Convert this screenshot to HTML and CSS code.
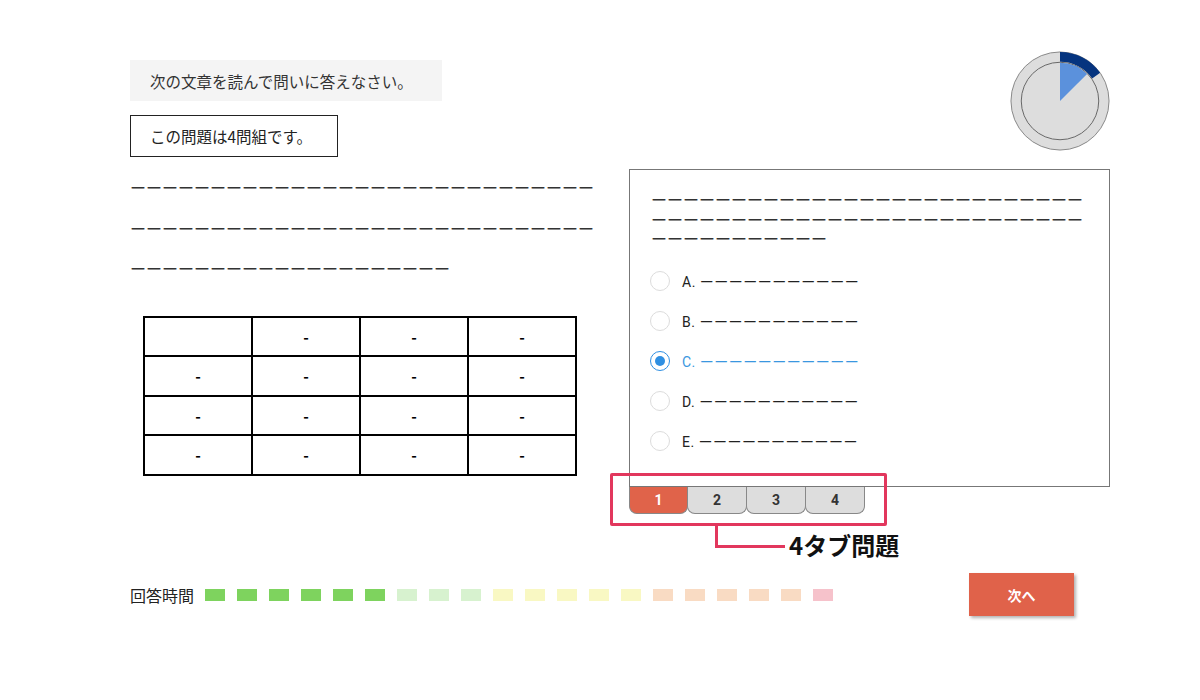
FILE: index.html
```html
<!DOCTYPE html>
<html lang="ja">
<head>
<meta charset="utf-8">
<title>問題</title>
<link rel="stylesheet" href="styles.css">
</head>
<body>
<div class="page">
  <div class="main">
    <div class="left">
      <div class="instruction">次の文章を読んで問いに答えなさい。</div>
      <div class="notice">この問題は4問組です。</div>
      <p class="passage">ーーーーーーーーーーーーーーーーーーーーーーーーーーーーーーーーーーーーーーーーーーーーーーーーーーーーーーーーーーーーーーーーーーーーーーーーーーーーーー</p>
      <table class="data">
        <tr><td></td><td>-</td><td>-</td><td>-</td></tr>
        <tr><td>-</td><td>-</td><td>-</td><td>-</td></tr>
        <tr><td>-</td><td>-</td><td>-</td><td>-</td></tr>
        <tr><td>-</td><td>-</td><td>-</td><td>-</td></tr>
      </table>
    </div>
    <div class="right">
      <div class="timer">
        <svg width="102" height="102" viewBox="-1 -1 104 104">
          <circle cx="51" cy="51" r="50" fill="#dddddd" stroke="#888888" stroke-width="1"/>
          <path d="M51 1 A50 50 0 0 1 91.96 22.32 L83.77 28.06 A40 40 0 0 0 51 11 Z" fill="#05347f"/>
          <circle cx="51" cy="51" r="39.5" fill="none" stroke="#666666" stroke-width="1"/>
          <path d="M51 51 L51 12 A39 39 0 0 1 78.58 23.42 Z" fill="#5b91dc"/>
        </svg>
      </div>
      <div class="question">
        <p class="q-text">ーーーーーーーーーーーーーーーーーーーーーーーーーーーーーーーーーーーーーーーーーーーーーーーーーーーーーーーーーーーーーーーーー</p>
        <ul class="options">
          <li class="option"><span class="radio"></span><span class="opt-label">A. ーーーーーーーーーーー</span></li>
          <li class="option"><span class="radio"></span><span class="opt-label">B. ーーーーーーーーーーー</span></li>
          <li class="option selected"><span class="radio"></span><span class="opt-label">C. ーーーーーーーーーーー</span></li>
          <li class="option"><span class="radio"></span><span class="opt-label">D. ーーーーーーーーーーー</span></li>
          <li class="option"><span class="radio"></span><span class="opt-label">E. ーーーーーーーーーーー</span></li>
        </ul>
      </div>
      <div class="tabs">
        <button class="tab active">1</button>
        <button class="tab">2</button>
        <button class="tab">3</button>
        <button class="tab">4</button>
        <div class="callout-box"></div>
        <div class="callout-line"></div>
        <div class="callout-label">4タブ問題</div>
      </div>
    </div>
  </div>
  <div class="footer">
    <span class="time-label">回答時間</span>
    <div class="time-bar">
      <span class="seg g"></span><span class="seg g"></span><span class="seg g"></span><span class="seg g"></span><span class="seg g"></span><span class="seg g"></span>
      <span class="seg lg"></span><span class="seg lg"></span><span class="seg lg"></span>
      <span class="seg y"></span><span class="seg y"></span><span class="seg y"></span><span class="seg y"></span><span class="seg y"></span>
      <span class="seg o"></span><span class="seg o"></span><span class="seg o"></span><span class="seg o"></span><span class="seg o"></span>
      <span class="seg p"></span>
    </div>
    <button class="next">次へ</button>
  </div>
</div>
</body>
</html>
```

FILE: styles.css
```css
* { box-sizing: border-box; }
html, body { margin: 0; background: #fff; }
body {
  font-family: "Noto Sans CJK JP", "Noto Sans", sans-serif;
  color: #222;
  width: 1200px;
  height: 700px;
  overflow: hidden;
}
.page {
  padding: 50px 90px 0 130px;
}
.main {
  display: flex;
  gap: 29px;
}
.left { width: 470px; }
.right { width: 481px; }

.instruction {
  margin-top: 10px;
  width: 312px;
  height: 41px;
  background: #f4f4f4;
  padding-left: 20px;
  display: flex;
  align-items: center;
  font-size: 15.5px;
  color: #333;
}
.notice {
  margin-top: 14px;
  width: 208px;
  height: 42px;
  border: 1px solid #222;
  padding-left: 19px;
  display: flex;
  align-items: center;
  font-size: 15.5px;
  color: #222;
}
.passage {
  margin: 10px 0 0;
  font-size: 16px;
  line-height: 40.5px;
  color: #333;
  line-break: anywhere;
  word-break: break-all;
}
.data {
  margin: 27px 0 0 13px;
  border-collapse: collapse;
  table-layout: fixed;
  width: 434px;
}
.data td {
  border: 2px solid #000;
  height: 39.5px;
  padding: 0;
  text-align: center;
  font-size: 15px;
  font-weight: bold;
  color: #000;
}

.timer {
  display: flex;
  justify-content: flex-end;
  height: 100px;
  margin-right: -1px;
}
.timer svg { display: block; }

.question {
  margin-top: 19px;
  height: 318px;
  border: 1px solid #777;
  padding: 20px 21px 0;
}
.q-text {
  margin: 0;
  font-size: 16px;
  line-height: 19.5px;
  color: #333;
  line-break: anywhere;
  word-break: break-all;
}
.options {
  list-style: none;
  margin: 12px 0 0 -1px;
  padding: 0;
}
.option {
  height: 40px;
  display: flex;
  align-items: center;
  gap: 12px;
  font-family: Roboto, "Noto Sans CJK JP", sans-serif;
  font-size: 14px;
  letter-spacing: 0.5px;
  color: #222;
}
.radio {
  width: 20px;
  height: 20px;
  border: 1px solid #dcdcdc;
  border-radius: 50%;
  display: flex;
  align-items: center;
  justify-content: center;
  flex: none;
}
.option.selected { color: #3a97e0; }
.option.selected .radio { border-color: #2f8fe2; }
.option.selected .radio::after {
  content: "";
  width: 10px;
  height: 10px;
  border-radius: 50%;
  background: #2f8fe2;
}

.tabs {
  display: flex;
  position: relative;
}
.tab {
  width: 60px;
  height: 27px;
  margin: 0 0 0 -1px;
  padding: 0;
  border: 1px solid #888;
  border-top: none;
  border-radius: 0 0 8px 8px;
  background: #dddddd;
  font-family: Roboto, "Noto Sans", sans-serif;
  font-weight: bold;
  font-size: 14px;
  color: #333;
}
.tab:first-child { margin-left: 0; width: 59px; }
.tab.active {
  background: #e0634a;
  color: #fff;
}
.callout-box {
  position: absolute;
  left: -19px;
  top: -14px;
  width: 277px;
  height: 53px;
  border: 3px solid #e2375d;
  border-radius: 2px;
}
.callout-line {
  position: absolute;
  left: 86px;
  top: 39px;
  width: 70px;
  height: 22px;
  border-left: 3px solid #e2375d;
  border-bottom: 3px solid #e2375d;
}
.callout-label {
  position: absolute;
  left: 160px;
  top: 43px;
  line-height: 30px;
  font-size: 24px;
  font-weight: bold;
  color: #111;
  white-space: nowrap;
}

.footer {
  display: flex;
  align-items: center;
  margin-top: 59px;
  padding-right: 36px;
}
.time-label {
  font-size: 16px;
  color: #222;
  margin-right: 11px;
}
.time-bar {
  display: flex;
  gap: 12px;
}
.seg {
  width: 20px;
  height: 12px;
}
.seg.g { background: #7ed35e; }
.seg.lg { background: #d7f2cf; }
.seg.y { background: #f9f8c3; }
.seg.o { background: #f9dbc3; }
.seg.p { background: #f6c2cb; }
.next {
  margin-left: auto;
  width: 105px;
  height: 43px;
  border: none;
  background: #e0624a;
  color: #fff;
  font-family: "Noto Sans CJK JP", sans-serif;
  font-weight: bold;
  font-size: 14px;
  box-shadow: 2px 2px 3px rgba(0, 0, 0, 0.3);
}
```
